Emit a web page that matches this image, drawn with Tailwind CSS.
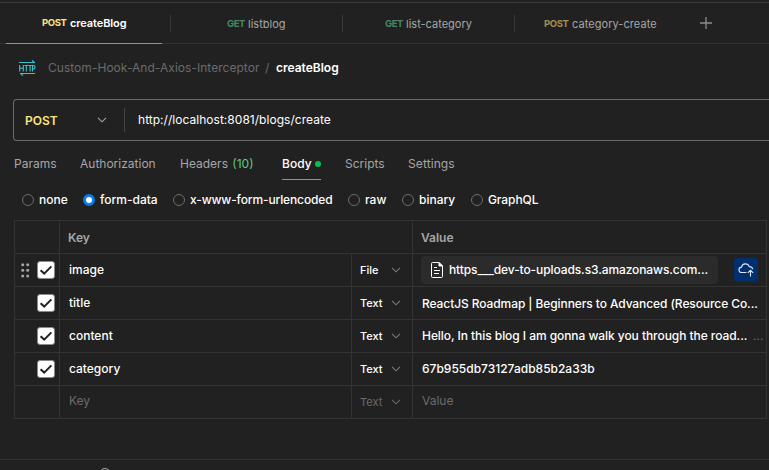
<!DOCTYPE html>
<html lang="en">
<head>
<meta charset="utf-8">
<title>createBlog</title>
<script src="https://cdn.jsdelivr.net/npm/@tailwindcss/browser@4"></script>
</head>
<body class="bg-[#212121] overflow-hidden">
<svg class="hidden">
  <symbol id="chev" viewBox="0 0 10 6"><path d="M1 .8 5 4.8 9 .8" fill="none" stroke="currentColor" stroke-width="1.1"/></symbol>
  <symbol id="check" viewBox="0 0 18 18"><rect x=".5" y=".5" width="17" height="17" rx="2.5" fill="#fff" stroke="#8a8a8a"/><path d="M3.6 9.2 7.2 12.6 14.4 5.4" fill="none" stroke="#212121" stroke-width="2"/></symbol>
</svg>
<div class="w-[769px] h-[470px] flex flex-col font-['Inter',sans-serif] text-[12px] leading-4 text-white whitespace-nowrap overflow-hidden">
  <div class="h-[3px] shrink-0 border-b border-[#3c3c3c]"></div>

  <!-- Request tabs -->
  <nav class="h-[41px] shrink-0 flex border-b border-[#333] text-[11px] text-[#a6a6a6]">
    <div class="ml-[6px] -mb-px w-[156px] h-[41px] pl-[36px] flex items-center border-b border-[#ff6c37] text-white font-semibold"><span class="w-[28px] text-[9.5px] tracking-[-0.4px] font-bold text-[#ffe47e]">POST</span><span class="tracking-[-0.1px]">createBlog</span></div>
    <div class="ml-[8px] w-[172px] h-[17px] mt-[12px] pl-[56px] flex items-center border-l border-[#3a3a3a]"><span class="w-[21px] text-[9.5px] tracking-[-0.4px] font-bold text-[#468763]">GET</span>listblog</div>
    <div class="w-[172px] h-[17px] mt-[12px] pl-[42px] flex items-center border-l border-[#3a3a3a]"><span class="w-[21px] text-[9.5px] tracking-[-0.4px] font-bold text-[#468763]">GET</span>list-category</div>
    <div class="w-[172px] h-[17px] mt-[12px] pl-[29px] flex items-center border-l border-[#3a3a3a]"><span class="w-[28px] text-[9.5px] tracking-[-0.4px] font-bold text-[#a39150]">POST</span><span class="tracking-[0.06px]">category-create</span></div>
    <svg class="ml-[14px] mt-[14px] w-[12px] h-[12px]" viewBox="0 0 12 12"><path d="M6 0V12M0 6H12" stroke="#8c8c8c" stroke-width="1.3"/></svg>
  </nav>

  <!-- Breadcrumb -->
  <div class="h-[55px] shrink-0 flex pt-[16px] pl-[19px] text-[#6b6b6b]">
    <svg class="w-[17px] h-[17px] mr-[12px]" viewBox="0 0 17 17" fill="none" stroke="#3fc0cf">
      <path d="M0 2.5H16M13 .3 15.5 2.5M1 13.5H16M1.5 13.5 4 15.5" stroke-width="1.1"/>
      <path d="M.7 5V11.5M4.3 5V11.5M.7 8.2H4.3M5.5 5.5H9.1M7.3 5.5V11.5M9.4 5.5H12.8M11.1 5.5V11.5M13.5 11.5V5.5H14.6Q16 5.5 16 7.2T14.6 9H13.5" stroke-width="1.1"/>
    </svg>
    <span class="w-[217px] tracking-[0.03px]">Custom-Hook-And-Axios-Interceptor</span><span class="w-[11px]">/</span><span class="text-white font-semibold">createBlog</span>
  </div>

  <!-- URL bar -->
  <div class="ml-[13px] h-[42px] shrink-0 flex items-center border border-r-0 border-[#6b6b6b] rounded-l-[4px]">
    <span class="pl-[11px] w-[83px] font-semibold text-[#ffe47e] pt-px">POST</span>
    <svg class="w-[10px] h-[6px] text-[#a6a6a6]"><use href="#chev"/></svg>
    <div class="ml-[17px] mr-[13px] w-px h-[24px] bg-[#444]"></div>
    <span class="tracking-[0.03px]">http://localhost:8081/blogs/create</span>
  </div>

  <!-- Request sections -->
  <div class="h-[39px] shrink-0 flex pl-[14px] pt-[15px] text-[#a6a6a6]">
    <span class="w-[66px]">Params</span><span class="w-[100px]">Authorization</span><span class="w-[102px]">Headers <span class="text-[#5fcc7f] ml-px">(10)</span></span>
    <span class="w-[39px] h-[24px] mr-[24px] flex justify-between border-b border-[#ff6c37] text-white font-medium">Body<i class="mt-[5px] w-[6px] h-[6px] rounded-full bg-[#0cbb52]"></i></span>
    <span class="w-[63px]">Scripts</span><span class="tracking-[0.1px]">Settings</span>
  </div>

  <!-- Body types -->
  <div class="h-[40px] shrink-0 flex items-center pl-[22px] font-medium">
    <i class="w-[12px] h-[12px] rounded-full border border-[#6b6b6b] mr-[5px]"></i><span class="w-[44px]">none</span>
    <i class="w-[12px] h-[12px] rounded-full border-[3px] border-[#097bed] bg-white mr-[5px]"></i><span class="w-[73px]">form-data</span>
    <i class="w-[12px] h-[12px] rounded-full border border-[#6b6b6b] mr-[5px]"></i><span class="w-[158px] tracking-[-0.13px]">x-www-form-urlencoded</span>
    <i class="w-[12px] h-[12px] rounded-full border border-[#6b6b6b] mr-[5px]"></i><span class="w-[37px]">raw</span>
    <i class="w-[12px] h-[12px] rounded-full border border-[#6b6b6b] mr-[5px]"></i><span class="w-[52px]">binary</span>
    <i class="w-[12px] h-[12px] rounded-full border border-[#6b6b6b] mr-[5px]"></i><span class="tracking-[-0.1px]">GraphQL</span>
  </div>

  <!-- Form data -->
  <div class="ml-[14px] w-[753px] h-[199px] shrink-0 border-t border-l border-[#333] [&>div]:grid [&>div]:grid-cols-[45px_292px_61px_354px] [&>div]:h-[33px] [&>div]:border-b [&>div]:border-[#333] [&>div>div]:flex [&>div>div]:items-center [&>div>div]:border-r [&>div>div]:border-[#333] [&>div>div]:min-w-0 font-medium">
    <div class="text-[#a6a6a6] font-semibold"><div></div><div class="pl-[8px] pt-[2px] col-span-2">Key</div><div class="pl-[8px] pt-[2px]">Value</div></div>
    <div>
      <div class="pl-[6px]">
        <svg class="w-[9px] h-[15px] mr-[7px]" viewBox="0 0 9 15" fill="#a6a6a6"><circle cx="1.7" cy="1.7" r="1.5"/><circle cx="6.7" cy="1.7" r="1.5"/><circle cx="1.7" cy="7.3" r="1.5"/><circle cx="6.7" cy="7.3" r="1.5"/><circle cx="1.7" cy="12.9" r="1.5"/><circle cx="6.7" cy="12.9" r="1.5"/></svg>
        <svg class="w-[18px] h-[18px]"><use href="#check"/></svg>
      </div>
      <div class="pl-[9px]">image</div>
      <div class="pl-[8px] text-[11px]"><span class="w-[31px]">File</span><svg class="w-[10px] h-[6px] text-[#7a7a7a]"><use href="#chev"/></svg></div>
      <div class="pl-[8px]">
        <div class="w-[297px] h-[28px] pl-[10px] flex items-center rounded-[4px] bg-[#2b2b2b]">
          <svg class="w-[12px] h-[16px] mr-[6px] shrink-0" viewBox="0 0 12 16" fill="none" stroke="#fff"><path d="M1.5 .5H8L11.5 4V14.5Q11.5 15.5 10.5 15.5H1.5Q.5 15.5 .5 14.5V1.5Q.5 .5 1.5 .5Z"/><path d="M8 .5V4H11.5Z" fill="#fff"/><path d="M3 5.5H6M3 8.5H9M3 11.5H8"/></svg>
          <span class="tracking-[-0.1px]">https___dev-to-uploads.s3.amazonaws.com...</span>
        </div>
        <div class="ml-[16px] w-[24px] h-[24px] rounded-[4px] bg-[#002f6e] flex items-center justify-center">
          <svg class="w-[16px] h-[16px]" viewBox="0 0 16 16" fill="none" stroke="#d8e6fa" stroke-width="1.1"><path d="M8.5 10.5H3.8A2.7 2.7 0 0 1 3.5 5.1 4 4 0 0 1 11.2 4.6Q14.2 4.6 14.8 7.2M12.5 14.5V8.5M9.8 10.9 12.5 8.3 15.2 10.9"/></svg>
        </div>
      </div>
    </div>
    <div>
      <div class="pl-[22px]"><svg class="w-[18px] h-[18px]"><use href="#check"/></svg></div>
      <div class="pl-[9px]">title</div>
      <div class="pl-[8px] text-[11px]"><span class="w-[31px]">Text</span><svg class="w-[10px] h-[6px] text-[#7a7a7a]"><use href="#chev"/></svg></div>
      <div class="pl-[9px] pt-[2px] tracking-[-0.09px]">ReactJS Roadmap | Beginners to Advanced (Resource Co...</div>
    </div>
    <div>
      <div class="pl-[22px]"><svg class="w-[18px] h-[18px]"><use href="#check"/></svg></div>
      <div class="pl-[9px]">content</div>
      <div class="pl-[8px] text-[11px]"><span class="w-[31px]">Text</span><svg class="w-[10px] h-[6px] text-[#7a7a7a]"><use href="#chev"/></svg></div>
      <div class="pl-[9px]"><span class="w-[331px] tracking-[-0.06px]">Hello, In this blog I am gonna walk you through the road...</span><span class="text-[#6b6b6b] font-normal">...</span></div>
    </div>
    <div>
      <div class="pl-[22px]"><svg class="w-[18px] h-[18px]"><use href="#check"/></svg></div>
      <div class="pl-[9px]">category</div>
      <div class="pl-[8px] text-[11px]"><span class="w-[31px]">Text</span><svg class="w-[10px] h-[6px] text-[#7a7a7a]"><use href="#chev"/></svg></div>
      <div class="pl-[9px]">67b955db73127adb85b2a33b</div>
    </div>
    <div class="text-[#6b6b6b] font-normal">
      <div></div>
      <div class="pl-[9px] pb-[2px]">Key</div>
      <div class="pl-[8px] text-[11px]"><span class="w-[31px]">Text</span><svg class="w-[10px] h-[6px]"><use href="#chev"/></svg></div>
      <div class="pl-[9px] pb-[2px]">Value</div>
    </div>
  </div>

  <!-- Response pane edge -->
  <div class="mt-[40px] h-[20px] shrink-0 border-t border-[#333] pl-[99px] pt-[8px]"><i class="block w-[12px] h-[12px] rounded-full border border-[#a6a6a6]"></i></div>
</div>
</body>
</html>
